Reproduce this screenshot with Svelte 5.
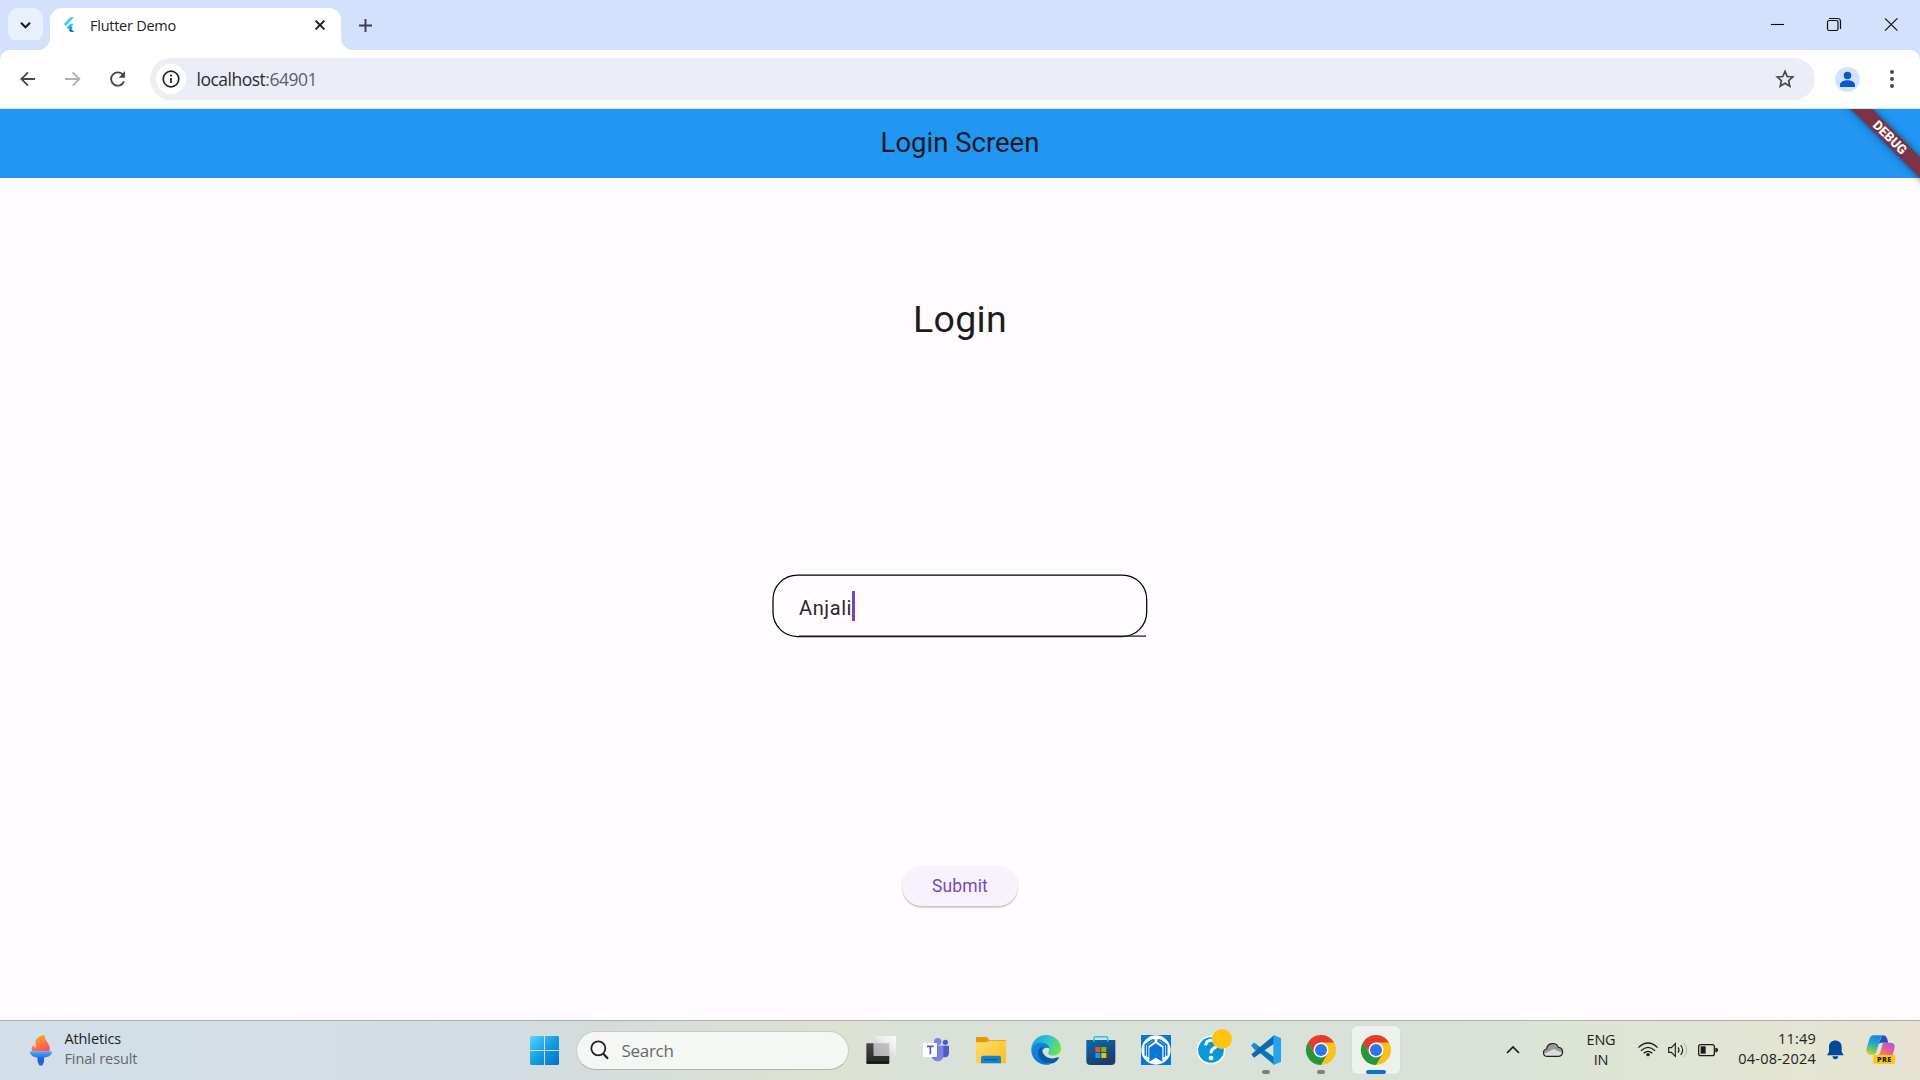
<script>
  const tasks = [
    { id: 'view' }, { id: 'teams' }, { id: 'files' }, { id: 'edge' }, { id: 'store' },
    { id: 'assist' }, { id: 'help' }, { id: 'code', state: 'running' },
    { id: 'chrome', state: 'running' }, { id: 'chrome', state: 'active' }
  ];
</script>

<div class="screen">
  <header class="tabstrip">
    <div class="tabsearch">
      <svg width="35" height="34" viewBox="0 0 35 34"><path d="M13 14.7l4.5 4.5 4.5-4.5" fill="none" stroke="#1b1c1f" stroke-width="2.1" /></svg>
    </div>
    <div class="tab">
      <svg class="flare" width="12" height="12" viewBox="0 0 12 12"><path d="M12 0v12H0A12 12 0 0 0 12 0z" fill="#fff" /></svg>
      <svg class="favicon" width="12" height="16" viewBox="192 52 36 48">
        <path d="M222 53h-11l-19 20 6 6z" fill="#45c6fb" />
        <path d="M222 72h-11l-11 11 12 13h11l-12-13z" fill="#40bdf5" />
        <path d="M206 84l6-6 6 6-6 6z" fill="#1f96e0" />
        <path d="M212 90l-5 2 5 4h11z" fill="#0a4fa8" />
      </svg>
      <span class="tabname">Flutter Demo</span>
      <svg class="close" width="12" height="12" viewBox="0 0 12 12"><path d="M1.6 1.6l8.8 8.8M10.4 1.6l-8.8 8.8" stroke="#1b1c1f" stroke-width="2" /></svg>
      <svg class="flare right" width="12" height="12" viewBox="0 0 12 12"><path d="M0 0v12h12A12 12 0 0 1 0 0z" fill="#fff" /></svg>
    </div>
    <svg class="plus" width="13" height="13" viewBox="0 0 13 13"><path d="M6.5 0v13M0 6.5h13" stroke="#3c3f44" stroke-width="1.9" /></svg>
    <div class="controls">
      <svg width="57" height="50" viewBox="0 0 57 50"><path d="M22 24.5h13" stroke="#000" stroke-width="1.1" /></svg>
      <svg width="57" height="50" viewBox="0 0 57 50"><path d="M23 18.5h8.5a3 3 0 0 1 3 3V29" fill="none" stroke="#111" stroke-width="1.2" /><rect x="21.5" y="20.5" width="10.5" height="10" rx="1.8" fill="none" stroke="#111" stroke-width="1.2" /></svg>
      <svg width="57" height="50" viewBox="0 0 57 50"><path d="M22 18.3l12.4 12.4M34.4 18.3L22 30.7" stroke="#111" stroke-width="1.2" /></svg>
    </div>
  </header>

  <nav class="toolbar">
    <svg width="150" height="58" viewBox="0 150 450 174">
      <g fill="none" stroke-width="5.4">
        <path d="M105 237H65M84 217l-20 20 20 20" stroke="#46484c" />
        <path d="M195 237h41M218 217l20 20-20 20" stroke="#aeb0b4" />
        <path d="M370 226a20 20 0 1 0 2 18" stroke="#46484c" stroke-width="5.6" />
      </g>
      <path d="M375 213v20h-19z" fill="#46484c" />
    </svg>
    <div class="omnibox">
      <div class="site">
        <svg width="18" height="18" viewBox="0 0 18 18"><circle cx="9" cy="9" r="7.8" fill="none" stroke="#202124" stroke-width="1.7" /><path d="M9 8v5" stroke="#202124" stroke-width="1.7" /><circle cx="9" cy="5.6" r="1.1" fill="#202124" /></svg>
      </div>
      <span class="url">localhost<i>:64901</i></span>
      <svg class="star" width="20" height="20" viewBox="0 0 20 20"><path d="M10 2.400l2.200 5.100 5.600.5-4.200 3.700 1.200 5.500-4.800-2.900-4.800 2.900 1.200-5.500L2.200 8l5.600-.5z" fill="none" stroke="#46484c" stroke-width="1.7" /></svg>
    </div>
    <svg class="profile" width="25" height="25" viewBox="345 198 75 75"><circle cx="382.5" cy="235.5" r="37.5" fill="#d3e3fd" /><circle cx="382.5" cy="223.5" r="11.5" fill="#0b57d0" /><path d="M360 258v-7c0-9 13-13 22.500-13s22.500 4 22.500 13v7z" fill="#0b57d0" /></svg>
    <svg class="dots" width="6" height="20" viewBox="0 0 6 20"><circle cx="3" cy="3" r="2" fill="#46484c" /><circle cx="3" cy="10" r="2" fill="#46484c" /><circle cx="3" cy="17" r="2" fill="#46484c" /></svg>
  </nav>

  <section class="app">
    <div class="appbar"><h1>Login Screen</h1></div>
    <div class="corner"><div class="ribbon">DEBUG</div></div>
    <main>
      <h2>Login</h2>
      <div class="field">
        <svg class="outline" width="376" height="64" viewBox="0 0 376 64"><rect x="1" y="1" width="373.7" height="61.5" rx="24.4" fill="none" stroke="#000" stroke-width="1.25" /><path d="M27 62h347" stroke="#1d1b20" stroke-width="1.25" /></svg>
        <span class="value">Anjali</span><span class="caret"></span>
      </div>
      <button>Submit</button>
    </main>
  </section>

  <footer>
    <div class="widget">
      <svg width="22" height="31" viewBox="88 71 66 92">
        <defs>
          <linearGradient id="flame" x1="0" y1="0" x2=".5" y2="1"><stop offset="0" stop-color="#f5a91d" /><stop offset=".5" stop-color="#fb8a35" /><stop offset="1" stop-color="#fb5160" /></linearGradient>
          <linearGradient id="bowl" x1="0" y1="0" x2="0" y2="1"><stop offset="0" stop-color="#3db4f8" /><stop offset="1" stop-color="#2a70e2" /></linearGradient>
        </defs>
        <path d="M94 120c-3-9 1-15 6-20 0 5 2 8 5 8 3-5-3-12 0-20 4-10 14-17 27-17-2 8 4 15 10 24 5 8 6 16 5 25z" fill="url(#flame)" />
        <path d="M110 136h20v15l-5 11h-9l-5-11z" fill="#245ed8" />
        <path d="M88 120h66c1 9-11 18-24 18h-19c-13 0-24-9-23-18z" fill="url(#bowl)" />
      </svg>
      <div class="news"><b>Athletics</b><span>Final result</span></div>
    </div>

    <div class="launcher">
      <svg class="start" width="29" height="29" viewBox="0 0 29 29">
        <defs><linearGradient id="win" gradientUnits="userSpaceOnUse" x1="0" y1="0" x2="29" y2="29"><stop offset="0" stop-color="#50d8ff" /><stop offset=".5" stop-color="#149de3" /><stop offset="1" stop-color="#006fd0" /></linearGradient></defs>
        <path d="M1 0h13v14H0V1zM15 0h13l1 1v13H15zM0 15h14v14H1l-1-1zM15 15h14v13l-1 1H15z" fill="url(#win)" />
      </svg>
      <div class="search">
        <svg width="19" height="20" viewBox="242 92 57 60"><circle cx="267" cy="117" r="21" fill="#fff" fill-opacity=".6" stroke="#222" stroke-width="5.5" /><path d="M282 133l14 15" stroke="#222" stroke-width="6.5" /></svg>
        <span>Search</span>
      </div>
      {#each tasks as t}
        <div class="task {t.state ?? ''}">
          {#if t.id === 'view'}
            <svg viewBox="47 75 90 90">
              <defs><linearGradient id="dk" x1="0" y1="0" x2="0" y2="1"><stop offset="0" stop-color="#4a4a48" /><stop offset="1" stop-color="#222221" /></linearGradient><linearGradient id="lt" x1="0" y1="1" x2="1" y2="0"><stop offset="0" stop-color="#b8b8b8" /><stop offset=".6" stop-color="#ededed" /><stop offset="1" stop-color="#fafafa" /></linearGradient></defs>
              <rect x="48" y="100" width="69" height="62" rx="3" fill="url(#dk)" /><path d="M49 157h67" stroke="#000" stroke-width="2" />
              <rect x="70" y="78" width="67" height="60" rx="2" fill="url(#lt)" /><path d="M70 100h47v38H72l-2-2z" fill="#aaa" opacity=".65" />
            </svg>
          {:else if t.id === 'teams'}
            <svg viewBox="213 75 90 90">
              <circle cx="263" cy="95" r="11" fill="#7b83eb" /><circle cx="286" cy="97" r="8" fill="#5059c9" />
              <path d="M275 107h22v22c0 8-5 13-12 13s-10-5-10-8z" fill="#5059c9" /><path d="M245 107h35v29c0 11-7 18-17 18-11 0-18-8-18-18z" fill="#7b83eb" />
              <path d="M246 103h17v39h-17z" fill="#4048a8" opacity=".45" /><rect x="219" y="99" width="42" height="42" rx="2" fill="#fff" />
              <path d="M231 109h20M241 109v24" stroke="#5059c9" stroke-width="5" />
            </svg>
          {:else if t.id === 'files'}
            <svg viewBox="378 75 90 90">
              <defs><linearGradient id="fold" x1="0" y1="0" x2="1" y2="1"><stop offset="0" stop-color="#ffdc70" /><stop offset="1" stop-color="#ffbe20" /></linearGradient></defs>
              <path d="M378 84q0-3 3-3h28q3 0 5 4l3 5h49q2 0 2 3v15h-90z" fill="#dd9d0a" />
              <path d="M378 97h30l10-5h50v65q0 3-3 3h-84q-3 0-3-3z" fill="url(#fold)" />
              <path d="M393 160v-16q0-7 7-7h46q7 0 7 7v16z" fill="#1382cf" /><path d="M402 149h41" stroke="#0a5590" stroke-width="3" />
            </svg>
          {:else if t.id === 'edge'}
            <svg viewBox="543 75 90 90">
              <defs>
                <linearGradient id="eg" x1="0" y1=".2" x2="1" y2=".6"><stop offset="0" stop-color="#1ca4dc" /><stop offset=".5" stop-color="#30c3cd" /><stop offset="1" stop-color="#6ae64c" /></linearGradient>
                <linearGradient id="eb" x1="0" y1="0" x2=".6" y2="1"><stop offset="0" stop-color="#1a8bd8" /><stop offset="1" stop-color="#0874d1" /></linearGradient>
              </defs>
              <path d="M544 115c2-23 21-40 44-40 27 0 45 20 45 40 0 13-10 22-24 22-12 0-16-5-14-10 5-8 3-18-11-22-15-5-32-2-40 10z" fill="url(#eg)" />
              <path d="M544 115c8-15 25-21 38-16 12 4 16 11 16 16-12-6-24 4-24 18 0 18 12 30 27 30-30 8-60-15-57-48z" fill="url(#eb)" />
              <path d="M580 108c-14 5-19 19-13 32 7 17 25 25 42 20 9-4 14-9 17-15 2-3 0-4-3-3-14 6-31 4-40-7-8-9-7-20-3-27z" fill="#0c59a4" />
            </svg>
          {:else if t.id === 'store'}
            <svg viewBox="707 75 90 90">
              <defs><linearGradient id="bag" x1="0" y1="0" x2=".5" y2="1"><stop offset="0" stop-color="#0b6ab5" /><stop offset="1" stop-color="#203a68" /></linearGradient></defs>
              <path d="M708 90h87v63q0 12-12 12h-63q-12 0-12-12z" fill="url(#bag)" />
              <path d="M731 95V85q0-5 5-5h31q5 0 5 5v10" fill="none" stroke="#2bc0f0" stroke-width="4.5" />
              <path d="M735 111h15v15h-15z" fill="#f25022" /><path d="M753 111h15v15h-15z" fill="#7fba00" /><path d="M735 129h15v15h-15z" fill="#00a4ef" /><path d="M753 129h15v15h-15z" fill="#ffb900" />
            </svg>
          {:else if t.id === 'assist'}
            <svg viewBox="33 75 90 90">
              <path d="M33 75h90v90H33z" fill="#0878d4" /><circle cx="78" cy="120" r="44" fill="#fff" />
              <path d="M58 155v-42l19-13 20 13v42l-20-12z" fill="#0878d4" />
              <path d="M46 137v-32l20-15h8M110 137v-32L90 90h-8M53 141v-34l20-14M103 141v-34L83 93" fill="none" stroke="#0878d4" stroke-width="5" />
            </svg>
          {:else if t.id === 'help'}
            <svg viewBox="198 75 90 90">
              <circle cx="243" cy="120" r="43" fill="#fff" /><circle cx="243" cy="120" r="38.5" fill="#0799d8" />
              <path d="M227 106q2-15 17-15 15 0 15 13 0 7-9 12-7 4-7 14" fill="none" stroke="#fff" stroke-width="9" /><circle cx="243" cy="144" r="7" fill="#fff" />
              <circle cx="276" cy="87" r="30" fill="#ffc20e" />
            </svg>
          {:else if t.id === 'code'}
            <svg viewBox="363 75 90 90">
              <path d="M364 107l8-9 60 43v23z" fill="#0a76bd" /><path d="M364 133l68-57v25l-60 42z" fill="#0e69ad" /><path d="M364 107l8-9 16 12-12 12z" fill="#1a8ad2" />
              <path d="M430 75l23 9v72l-23 9z" fill="#25a3f2" />
            </svg>
          {:else}
            <svg viewBox="0 0 90 90">
              <circle cx="45" cy="45" r="45" fill="#fcc21b" />
              <path d="M6 22.500A45 45 0 0 1 84 22.500H45L25.500 56.300z" fill="#e33b2e" />
              <path d="M6 22.500A45 45 0 0 0 45 90L64.500 56.300 45 67.500 25.500 56.300z" fill="#22973f" />
              <circle cx="45" cy="45" r="22.500" fill="#fff" /><circle cx="45" cy="45" r="18" fill="#2f74e8" />
            </svg>
          {/if}
          {#if t.state}<span class="mark"></span>{/if}
        </div>
      {/each}
    </div>

    <div class="tray">
      <svg class="chev" width="14" height="8" viewBox="0 0 14 8"><path d="M1 7l6-6 6 6" fill="none" stroke="#1b1b1b" stroke-width="1.7" /></svg>
      <svg class="cloud" width="20" height="14" viewBox="189 97 60 42"><path d="M202 137c-15 0-15-20-2-22 2-20 29-22 35-5 17 1 17 27 1 27z" fill="#9a9a9a" /><path d="M191 130l31-15 25 12c-1 6-5 10-11 10h-34c-6 0-9-3-11-7z" fill="#ddd" /><path d="M202 137c-15 0-15-20-2-22 2-20 29-22 35-5 17 1 17 27 1 27z" fill="none" stroke="#222" stroke-width="3.6" /></svg>
      <div class="lang"><span>ENG</span><span>IN</span></div>
      <svg width="80" height="16" viewBox="474 96 240 48">
        <g fill="none" stroke="#1b1b1b" stroke-width="3.8">
          <path d="M475 113q29-28 58 0M483 122q21-20 42 0M491 130q13-12 26 0" />
          <path d="M566 113h8l12-12v38l-12-12h-8z" stroke-width="3.4" /><path d="M594 112q6 8 0 16M602 105q12 15 0 30" stroke-width="3.4" /><path d="M611 99q18 21 0 42" stroke="#b5b8aa" stroke-width="3" />
          <rect x="656" y="104" width="47" height="33" rx="6" />
        </g>
        <circle cx="504" cy="134" r="5" fill="#1b1b1b" /><path d="M662 109h15v22h-15z" fill="#1b1b1b" /><path d="M706 113q8 0 8 7t-8 7z" fill="#1b1b1b" />
      </svg>
      <div class="clock"><span>11:49</span><span>04-08-2024</span></div>
      <svg class="bell" width="17" height="20" viewBox="380 92 51 60"><path d="M380 138l6-11v-15c0-25 38-25 38 0v15l6 11zM396 141h18q-2 9-9 9t-9-9z" fill="#04489b" /></svg>
      <svg width="30" height="30" viewBox="497 80 90 90">
        <defs>
          <linearGradient id="c1" x1=".3" y1="0" x2="0" y2="1"><stop offset="0" stop-color="#1b86e3" /><stop offset=".35" stop-color="#22a9c8" /><stop offset=".7" stop-color="#7fc65a" /><stop offset="1" stop-color="#f2cc2a" /></linearGradient>
          <linearGradient id="c2" x1="1" y1="0" x2=".2" y2="1"><stop offset="0" stop-color="#a259ec" /><stop offset=".5" stop-color="#e258a8" /><stop offset="1" stop-color="#fb8a4a" /></linearGradient>
        </defs>
        <path d="M546 81c14 0 14 10 18 22h-22l-8 4z" fill="#1852c4" />
        <path d="M520 81h28q-7 5-10 16l-10 34q-3 9-12 9c-16 0-20-12-17-22l8-26q4-11 13-11z" fill="url(#c1)" />
        <path d="M548 103h22c12 0 15 9 12 18l-5 20h-44q5-3 8-14z" fill="url(#c2)" />
        <rect x="518" y="140" width="67" height="27" rx="6" fill="#fdc90f" />
        <text x="552" y="161" text-anchor="middle">PRE</text>
      </svg>
    </div>
  </footer>
</div>

<style>
  :global(body) { margin: 0; overflow: hidden; }
  .screen { width: 1920px; height: 1080px; display: flex; flex-direction: column; background: #fffbff; font-family: 'Open Sans', 'Noto Sans', sans-serif; color: #222; }
  svg { display: block; flex: none; overflow: visible; }

  .tabstrip { height: 50px; flex: none; display: flex; background: #d3e1fd; }
  .tabsearch { width: 35px; height: 34px; margin: 8px 7px 0 8px; border-radius: 11px; background: #eaf1fe; }
  .tab { position: relative; width: 291px; height: 42px; margin-top: 8px; display: flex; align-items: center; box-sizing: border-box; padding: 0 15px 8px 14px; background: #fff; border-radius: 12px 12px 0 0; }
  .flare { position: absolute; bottom: 0; left: -12px; }
  .flare.right { left: auto; right: -12px; }
  .tabname { margin: 1px 0 0 14px; font-size: 14.5px; letter-spacing: -0.25px; line-height: 20px; flex: 1; }
  .plus { margin: 18.5px 0 0 18px; }
  .controls { display: flex; margin-left: auto; }

  .toolbar { height: 58px; flex: none; display: flex; align-items: center; background: #fff; border-bottom: 1px solid #dbe2e0; border-radius: 10px 10px 0 0; box-shadow: 0 -10px 0 0 #d3e1fd; }
  .omnibox { width: 1665px; height: 42px; border-radius: 21px; background: #ebeef7; display: flex; align-items: center; box-sizing: border-box; padding: 0 20px 0 6px; }
  .site { width: 30px; height: 30px; border-radius: 50%; background: #fff; display: flex; align-items: center; justify-content: center; }
  .url { margin-left: 10.5px; font-size: 17.5px; letter-spacing: -0.5px; flex: 1; color: #2b2c30; }
  .url i { font-style: normal; color: #5c5e64; }
  .profile { margin-left: 20px; }
  .dots { margin-left: 29px; }

  .app { position: relative; flex: 1; display: flex; flex-direction: column; font-family: Roboto, sans-serif; color: #1c1b1f; }
  .appbar { height: 69px; flex: none; background: #2196f3; display: flex; justify-content: center; align-items: center; }
  h1, h2 { margin: 0; font-weight: 400; }
  h1 { font-size: 27.5px; line-height: 36px; padding-bottom: 1px; }
  .corner { position: absolute; top: 0; right: 0; width: 90px; height: 90px; overflow: hidden; }
  .ribbon { position: absolute; left: 0; top: 20.5px; width: 120px; height: 15px; line-height: 15px; text-align: center; font-size: 13px; font-weight: 800; color: #fff; background: #7b3347; box-shadow: 0 0 7px rgba(0, 0, 0, 0.5); transform: rotate(45deg); }
  main { display: flex; flex-direction: column; align-items: center; }
  h2 { margin-top: 114px; font-size: 37.5px; line-height: 54px; letter-spacing: 0.3px; }
  .field { position: relative; width: 376px; height: 64px; margin-top: 228px; display: flex; align-items: center; box-sizing: border-box; padding-left: 27px; }
  .outline { position: absolute; left: 0; top: 0; }
  .value { font-size: 20px; letter-spacing: 0.6px; line-height: 30px; padding-top: 4px; color: #29272c; }
  .caret { width: 2.5px; height: 30px; background: #7146bb; }
  button { margin-top: 228px; width: 116px; height: 40px; padding: 0; border: 0; border-radius: 20px; background: #f7f2fb; box-shadow: 0 1.5px 1.5px rgba(0, 0, 0, 0.25); font: 400 17.5px Roboto, sans-serif; letter-spacing: 0.125px; color: #7549c0; }

  footer { height: 60px; flex: none; box-sizing: border-box; border-top: 1px solid #abafae; padding-bottom: 1px; display: flex; align-items: center; background: linear-gradient(90deg, #d3dfe9 0, #d3dee4 400px, #d5dcdc 600px, #dee2d2 830px, #d9e1d8 920px, #d8e2d9 1450px, #dee5d5 1620px, #e4e5d2 1800px, #e6e3d3 1920px); }
  .widget { width: 500px; padding-left: 29.5px; display: flex; align-items: center; }
  .news { margin-left: 13px; padding-bottom: 2px; display: flex; flex-direction: column; font-size: 14.5px; line-height: 20px; letter-spacing: -0.12px; }
  .news b { font-weight: 400; }
  .news span { color: #62676b; }
  .launcher { display: flex; align-items: center; margin-left: 0.5px; }
  .search { width: 273px; height: 39px; margin: 0 4px 0 17px; box-sizing: border-box; border: 1px solid #c6cbc9; border-bottom-color: #b0b3ae; border-radius: 20px; background: #f5f7f5; display: flex; align-items: center; padding-left: 13px; }
  .search span { margin-left: 12.5px; font-size: 17px; letter-spacing: -0.3px; color: #666867; }
  .task { position: relative; width: 48px; height: 48px; margin: 0 3.5px; border-radius: 5px; display: flex; align-items: center; justify-content: center; }
  .task svg { width: 30px; height: 30px; }
  .active { background: #edf2ed; box-shadow: 0 0 0 0.5px #cfd6ce; }
  .mark { position: absolute; left: 20px; bottom: 0; width: 8px; height: 4px; border-radius: 2px; background: #7d817c; }
  .active .mark { left: 14px; width: 20px; background: #0674d4; }
  .tray { margin-left: auto; margin-right: 24px; display: flex; align-items: center; font-size: 14.5px; }
  .cloud { margin: 0 13px 0 23px; }
  .lang, .clock { display: flex; flex-direction: column; line-height: 20px; letter-spacing: -0.2px; }
  .lang { width: 50px; margin-right: 12px; align-items: center; }
  .clock { width: 98px; padding-bottom: 2px; align-items: flex-end; letter-spacing: 0.2px; }
  .bell { margin: 0 22px 0 11px; }
  text { font: 800 22px 'Open Sans', sans-serif; fill: #222; letter-spacing: 1px; }
</style>
